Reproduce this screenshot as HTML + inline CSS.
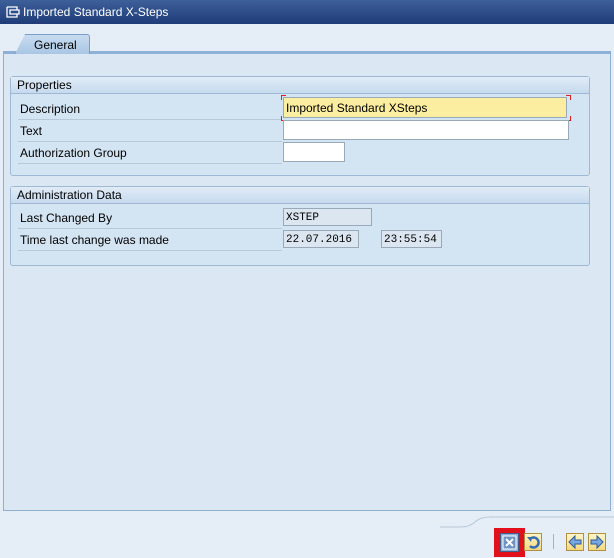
<html><head><style>
body{margin:0;width:614px;height:558px;background:#e5eef6;font-family:"Liberation Sans",sans-serif;font-size:12px;position:relative;overflow:hidden}
.a{position:absolute}
.title{left:0;top:0;width:614px;height:24px;background:linear-gradient(#3d5f9a,#1f3c78);color:#fff;font-size:12px}
.panel{left:3px;top:51px;width:606px;height:456px;border:1px solid #8fb0d0;border-top:3px solid #8fb0d6;background:#dbe8f4}
.tab{left:15px;top:34px;width:73px;height:19px;background:linear-gradient(#c8dcf0,#a9c6e4);border:1px solid #7aa0c8;border-bottom:none;border-radius:0 3px 0 0;clip-path:polygon(10px 0,100% 0,100% 100%,0 100%)}
.grp{border:1px solid #9fb9d4;background:#d3e4f3;border-radius:3px}
.gh{background:linear-gradient(#e1ecf7,#c6daee);height:16px;border-bottom:1px solid #9fb9d4;padding-left:6px;line-height:16px}
.lbl{left:18px;width:262px;height:20px;border-bottom:1px solid #b8c8d8;line-height:20px;padding-left:2px}
.in{background:#fff;border:1px solid #9aa9b8;height:18px}
.ro{background:#dce6f0;border:1px solid #9aa9b8;height:18px;font-family:"Liberation Mono",monospace;font-size:11px;line-height:18px;padding-left:2px;box-sizing:border-box}
.btn{width:18px;height:18px;background:linear-gradient(#fff6c8,#f2d880);border:1px solid #b09040;box-sizing:border-box}
</style></head><body>
<div class="a title"><svg class="a" style="left:6px;top:6px" width="14" height="12"><path d="M1 1h10v3M1 1v10h10v-3M4 4h9v4H4z" stroke="#fff" fill="none" stroke-width="1.3"/></svg><span class="a" style="left:23px;top:5px">Imported Standard X-Steps</span></div>
<div class="a panel"></div>
<div class="a tab"><span class="a" style="left:18px;top:3px">General</span></div>
<div class="a grp" style="left:10px;top:76px;width:578px;height:98px"><div class="gh">Properties</div></div>
<div class="a lbl" style="top:99px">Description</div>
<div class="a lbl" style="top:121px">Text</div>
<div class="a lbl" style="top:143px">Authorization Group</div>
<div class="a in" style="left:283px;top:97px;width:284px;background:#fbeea0;line-height:20px;padding-left:2px;box-sizing:border-box;height:21px">Imported Standard XSteps</div>
<div class="a" style="left:281px;top:95px;width:4px;height:4px;border-left:1px solid #e02020;border-top:1px solid #e02020"></div>
<div class="a" style="left:566px;top:95px;width:4px;height:4px;border-right:1px solid #e02020;border-top:1px solid #e02020"></div>
<div class="a" style="left:281px;top:116px;width:4px;height:4px;border-left:1px solid #e02020;border-bottom:1px solid #e02020"></div>
<div class="a" style="left:566px;top:116px;width:4px;height:4px;border-right:1px solid #e02020;border-bottom:1px solid #e02020"></div>
<div class="a in" style="left:283px;top:120px;width:284px"></div>
<div class="a in" style="left:283px;top:142px;width:60px"></div>
<div class="a grp" style="left:10px;top:186px;width:578px;height:78px"><div class="gh">Administration Data</div></div>
<div class="a lbl" style="top:208px">Last Changed By</div>
<div class="a lbl" style="top:230px">Time last change was made</div>
<div class="a ro" style="left:283px;top:208px;width:89px">XSTEP</div>
<div class="a ro" style="left:283px;top:230px;width:76px">22.07.2016</div>
<div class="a ro" style="left:381px;top:230px;width:61px">23:55:54</div>
<svg class="a" style="left:440px;top:515px" width="174" height="20"><path d="M0 12 H20 Q30 12 35 7 Q40 2 50 2 H174" stroke="#b8c8d8" fill="none"/></svg>
<div class="a" style="left:494px;top:528px;width:31px;height:29px;background:#e0101c"></div>
<div class="a" style="left:500px;top:533px;width:19px;height:19px;background:#8fb0d8;border:1px solid #40608a;box-sizing:border-box"><svg width="17" height="17"><rect x="2" y="2" width="13" height="13" fill="#6d93c4" stroke="#fff"/><path d="M5 5l7 7M12 5l-7 7" stroke="#fff" stroke-width="2"/></svg></div>
<div class="a btn" style="left:524px;top:533px"><svg width="16" height="16"><path d="M5 5a5 5 0 1 1 0 7" stroke="#3a6ab0" stroke-width="2.5" fill="none"/><path d="M2 3l5 0-1 5z" fill="#3a6ab0"/></svg></div>
<div class="a" style="left:553px;top:534px;width:1px;height:15px;background:#a0b4c8"></div>
<div class="a btn" style="left:566px;top:533px"><svg width="16" height="16"><path d="M2 8l6-6v4h6v4H8v4z" fill="#7aa8e0" stroke="#2a5a9a"/></svg></div>
<div class="a btn" style="left:588px;top:533px"><svg width="16" height="16"><path d="M14 8l-6-6v4H2v4h6v4z" fill="#7aa8e0" stroke="#2a5a9a"/></svg></div>
</body></html>
